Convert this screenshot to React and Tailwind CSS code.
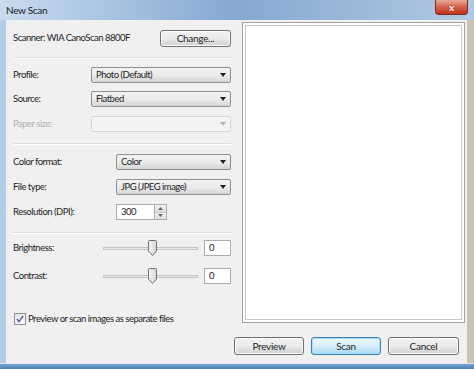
// App.jsx — "New Scan" dialog (Windows 7 look)

const font = { fontFamily: 'Lato, "Open Sans", "Liberation Sans", sans-serif' };

const Button = ({ children, primary, className = '' }) => (
  <div
    className={`flex items-center justify-center rounded-[3px] border text-[10px] tracking-[-0.3px] text-[#1e1e1e] ${
      primary
        ? 'border-[#3c7fb1] bg-gradient-to-b from-[#eaf6fd] via-[#d9f0fc] to-[#a7d9f5] shadow-[inset_0_0_0_1px_#a7e0f9]'
        : 'border-[#707070] bg-gradient-to-b from-[#f2f2f2] via-[#ebebeb] to-[#cfcfcf] shadow-[inset_0_0_0_1px_#fcfcfc]'
    } ${className}`}
  >
    {children}
  </div>
);

const Select = ({ value, disabled, className = '' }) => (
  <div
    className={`flex h-[16px] items-center justify-between rounded-[2px] border pl-[4px] pr-[4px] ${
      disabled
        ? 'border-[#d5d5d5] bg-[#f4f4f4] text-[#a0a0a0]'
        : 'border-[#8e8f8f] bg-gradient-to-b from-[#f2f2f2] via-[#ebebeb] to-[#d6d6d6] text-[#1e1e1e]'
    } ${className}`}
  >
    <span>{value}</span>
    <svg width="6" height="4" viewBox="0 0 6 4">
      <path d="M0 0h6L3 4z" fill={disabled ? '#b5b5b5' : '#222'} />
    </svg>
  </div>
);

const Separator = ({ className = '' }) => (
  <div className={`h-[2px] border-t border-[#d5dfe5] bg-white ${className}`} />
);

const Slider = () => (
  <div className="relative flex h-[16px] w-[95px] items-center">
    <div className="h-[3px] w-full border border-[#c4c4c4] bg-[#e7eaea]" />
    <svg className="absolute left-[45px] top-0" width="9" height="16" viewBox="0 0 9 16">
      <defs>
        <linearGradient id="th" x1="0" x2="1">
          <stop offset="0" stopColor="#f6f6f6" />
          <stop offset="1" stopColor="#d4d4d4" />
        </linearGradient>
      </defs>
      <path d="M1.5 0.5h6a1 1 0 0 1 1 1V11l-4 4.5L0.5 11V1.5a1 1 0 0 1 1-1z" fill="url(#th)" stroke="#707070" />
    </svg>
  </div>
);

const Row = ({ label, labelWidth, children, className = '', muted }) => (
  <div className={`flex items-center ${className}`}>
    <div className={`shrink-0 whitespace-nowrap ${muted ? 'text-[#b0b0b0]' : 'text-[#1e1e1e]'}`} style={{ width: labelWidth }}>
      {label}
    </div>
    {children}
  </div>
);

const TextBox = ({ value, className = '' }) => (
  <div className={`flex h-[16px] items-center border border-[#abadb3] bg-white pl-[4px] text-[#1e1e1e] ${className}`}>
    {value}
  </div>
);

export default function App() {
  return (
    <div
      className="flex h-[369px] w-[474px] flex-col overflow-hidden bg-gradient-to-r from-[#b5cde6] via-[#8eb0d6] to-[#c9c2b4] text-[9.5px] tracking-[-0.5px]"
      style={font}
    >
      {/* title bar */}
      <div className="flex h-[20px] shrink-0 items-start justify-between bg-gradient-to-r from-[#c9dbee] via-[#86a8d2] to-[#b2c9e2]">
        <span className="pl-[6px] pt-[4px] text-[10px] leading-[12px] tracking-[-0.3px] text-[#1a1a1a]">New Scan</span>
        <div className="mr-[6px] flex h-[15px] w-[33px] items-center justify-center rounded-b-[4px] border border-t-0 border-[#7a2d21] bg-gradient-to-b from-[#e9a99a] via-[#d5604a] to-[#c1301a]">
          <span className="text-[10px] font-bold leading-none tracking-normal text-white [text-shadow:0_0_2px_#5a1408]">x</span>
        </div>
      </div>

      {/* client area */}
      <div className="ml-[6px] mr-[7px] flex flex-1 flex-col bg-[#f0f0f0]">
        <div className="flex flex-1">
          {/* settings column */}
          <div className="ml-[7px] flex w-[218px] flex-col">
            <div className="mt-[10px] flex items-center justify-between">
              <span className="whitespace-nowrap text-[#1e1e1e]">Scanner: WIA CanoScan 8800F</span>
              <Button className="h-[17px] w-[71px]">Change...</Button>
            </div>
            <Separator className="mt-[10px]" />

            <Row label="Profile:" labelWidth={78} className="mt-[8px]">
              <Select value="Photo (Default)" className="flex-1" />
            </Row>
            <Row label="Source:" labelWidth={78} className="mt-[8px]">
              <Select value="Flatbed" className="flex-1" />
            </Row>
            <Row label="Paper size:" labelWidth={78} className="mt-[9px]" muted>
              <Select value="" disabled className="flex-1" />
            </Row>
            <Separator className="mt-[11px]" />

            <Row label="Color format:" labelWidth={103} className="mt-[9px]">
              <Select value="Color" className="flex-1" />
            </Row>
            <Row label="File type:" labelWidth={103} className="mt-[9px]">
              <Select value="JPG (JPEG image)" className="flex-1" />
            </Row>
            <Row label="Resolution (DPI):" labelWidth={103} className="mt-[9px]">
              <TextBox value="300" className="w-[39px]" />
              <div className="flex h-[16px] w-[12px] flex-col border border-l-0 border-[#abadb3]">
                <div className="flex flex-1 items-center justify-center bg-gradient-to-b from-[#f2f2f2] to-[#dcdcdc]">
                  <svg width="5" height="3" viewBox="0 0 5 3"><path d="M0 3h5L2.5 0z" fill="#666" /></svg>
                </div>
                <div className="flex flex-1 items-center justify-center border-t border-[#c4c4c4] bg-gradient-to-b from-[#f2f2f2] to-[#dcdcdc]">
                  <svg width="5" height="3" viewBox="0 0 5 3"><path d="M0 0h5L2.5 3z" fill="#666" /></svg>
                </div>
              </div>
            </Row>
            <Separator className="mt-[12px]" />

            <Row label="Brightness:" labelWidth={90} className="mt-[6px]">
              <Slider />
              <TextBox value="0" className="ml-[6px] flex-1" />
            </Row>
            <Row label="Contrast:" labelWidth={90} className="mt-[12px]">
              <Slider />
              <TextBox value="0" className="ml-[6px] flex-1" />
            </Row>

            <div className="mt-[28px] flex items-center gap-[2px] pl-[1px]">
              <div className="flex h-[12px] w-[12px] items-center justify-center border border-[#8f8f8f] bg-gradient-to-br from-[#e2e2e2] to-white">
                <svg width="8" height="8" viewBox="0 0 9 9">
                  <path d="M1 4.5l2.5 3L8 1" fill="none" stroke="#4a5f97" strokeWidth="1.6" />
                </svg>
              </div>
              <span className="whitespace-nowrap text-[#1e1e1e]">Preview or scan images as separate files</span>
            </div>
          </div>

          {/* preview pane */}
          <div className="ml-[11px] mr-[2px] mt-[2px] mb-[14px] flex flex-1 border border-[#a0a0a0] bg-white p-[2px]">
            <div className="flex-1 border border-[#c6c6c6] bg-white" />
          </div>
        </div>

        {/* buttons */}
        <div className="flex justify-end gap-[7px] pb-[8px] pr-[8px]">
          <Button className="h-[18px] w-[70px]">Preview</Button>
          <Button primary className="h-[18px] w-[70px]">Scan</Button>
          <Button className="h-[18px] w-[71px]">Cancel</Button>
        </div>
      </div>

      {/* bottom frame */}
      <div className="h-[6px] shrink-0 border-t border-[#dce8f4] bg-gradient-to-b from-[#7aa6d2] to-[#4b7fb6]" />
    </div>
  );
}
